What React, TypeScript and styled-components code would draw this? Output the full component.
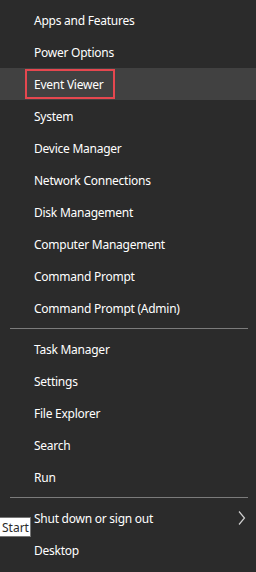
import React from "react";
import styled, { createGlobalStyle } from "styled-components";

const GlobalStyle = createGlobalStyle`
    html, body {
        margin: 0;
        padding: 0;
        background: #2b2b2b;
    }
`;

const Menu = styled.div`
    position: relative;
    display: flex;
    flex-direction: column;
    width: 256px;
    height: 572px;
    box-sizing: border-box;
    padding-top: 4px;
    background: #2b2b2b;
    font-family: "Segoe UI", "Noto Sans", "Open Sans", sans-serif;
    font-size: 12px;
    letter-spacing: -0.25px;
    color: #ffffff;
    overflow: hidden;
`;

const Item = styled.div<{ $active?: boolean }>`
    position: relative;
    display: flex;
    align-items: center;
    height: 32px;
    padding: 0 10px 0 34px;
    background: ${(p) => (p.$active ? "#414141" : "transparent")};
    white-space: nowrap;
`;

const Marked = styled.span`
    display: flex;
    align-items: center;
    box-sizing: border-box;
    width: 90px;
    height: 30px;
    margin-left: -9px;
    padding-left: 7px;
    border: 2px solid #e5474f;
`;

const Separator = styled.div`
    height: 1px;
    margin: 4px 8px 4px 10px;
    background: #7b7b7b;
`;

const Chevron = styled.svg`
    margin-left: auto;
    width: 8px;
    height: 16px;
`;

const Tooltip = styled.div`
    position: absolute;
    left: -1px;
    top: 15px;
    display: flex;
    align-items: center;
    box-sizing: border-box;
    width: 32px;
    height: 20px;
    padding-left: 2px;
    background: #ffffff;
    border: 1px solid #767676;
    color: #2b2b2b;
    font-size: 12px;
    letter-spacing: 0;
`;

const topItems = [
    "Apps and Features",
    "Power Options",
    "Event Viewer",
    "System",
    "Device Manager",
    "Network Connections",
    "Disk Management",
    "Computer Management",
    "Command Prompt",
    "Command Prompt (Admin)",
];

const midItems = ["Task Manager", "Settings", "File Explorer", "Search", "Run"];

const App = () => {
    return (
        <>
            <GlobalStyle />
            <Menu>
                {topItems.map((name) =>
                    name === "Event Viewer" ? (
                        <Item key={name} $active>
                            <Marked>{name}</Marked>
                        </Item>
                    ) : (
                        <Item key={name}>{name}</Item>
                    )
                )}
                <Separator />
                {midItems.map((name) => (
                    <Item key={name}>{name}</Item>
                ))}
                <Separator />
                <Item>
                    Shut down or sign out
                    <Chevron viewBox="0 0 8 16">
                        <path d="M1 1.5 L6.5 8 L1 14.5" fill="none" stroke="#cfcfcf" strokeWidth="1.2" />
                    </Chevron>
                    <Tooltip>Start</Tooltip>
                </Item>
                <Item>Desktop</Item>
            </Menu>
        </>
    );
};

export default App;
